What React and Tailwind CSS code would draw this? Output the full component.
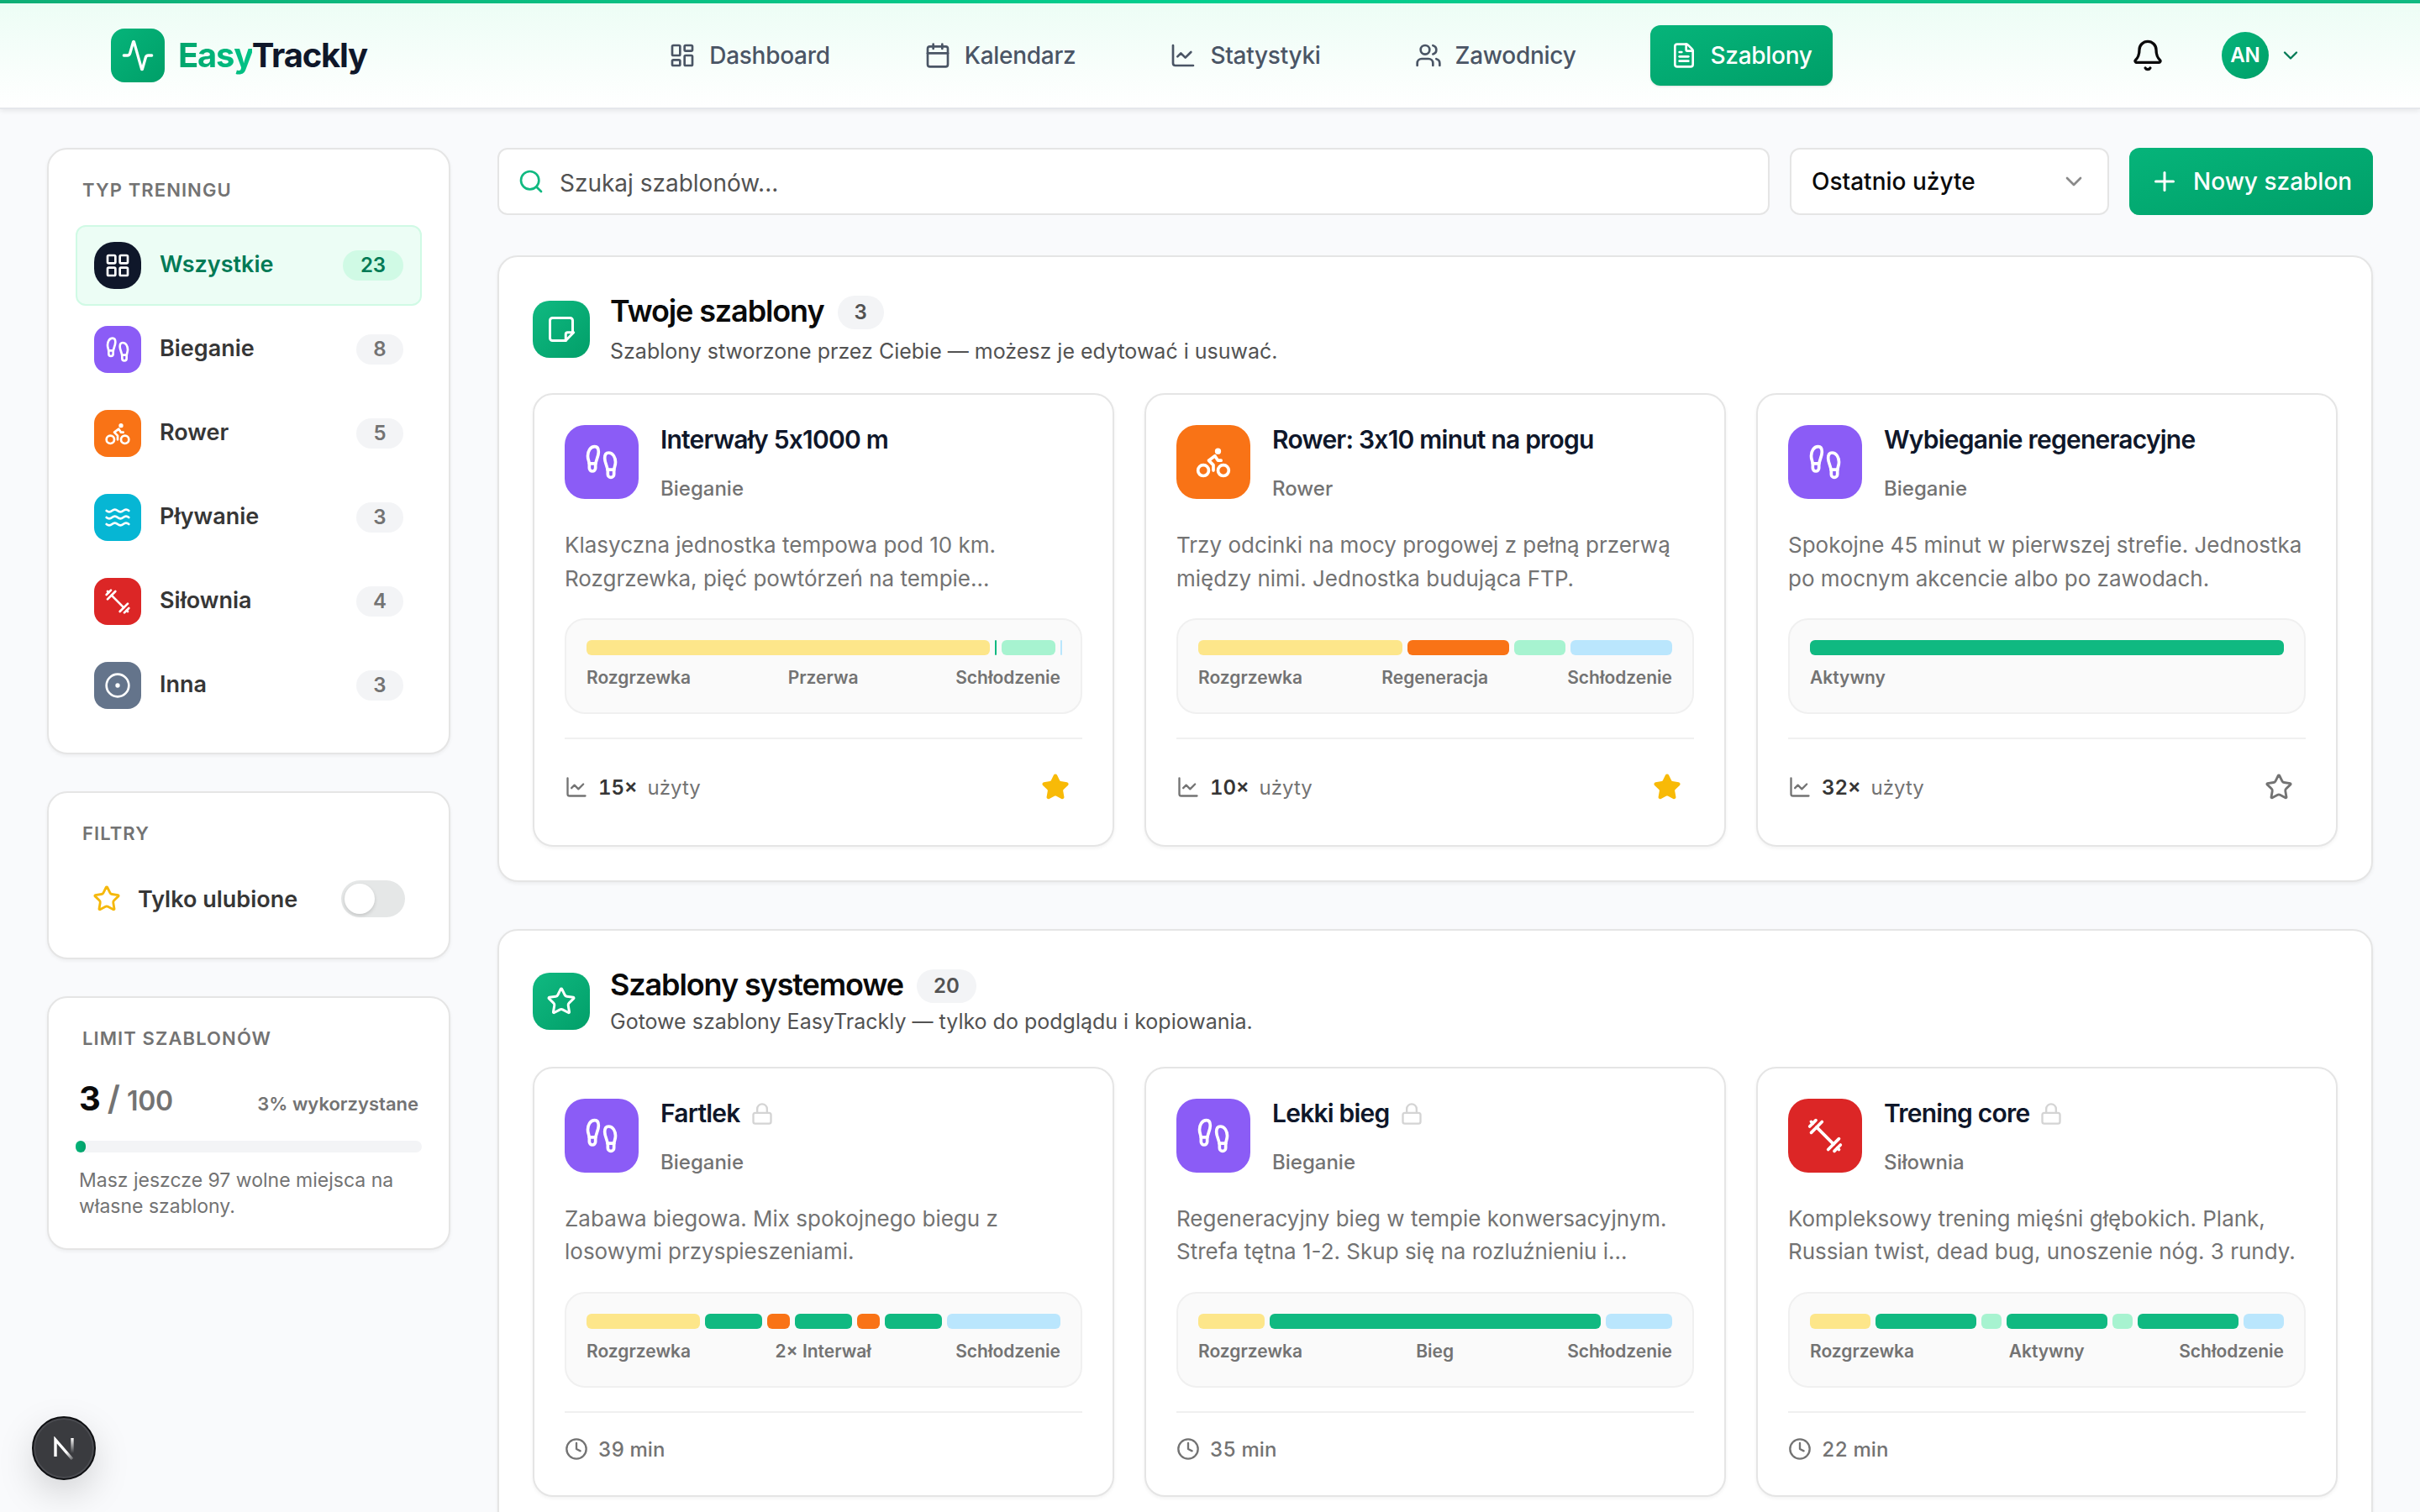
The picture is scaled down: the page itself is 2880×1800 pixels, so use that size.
import { useState } from 'react';
import {
  Activity, Bell, Bike, Calendar, ChartLine, ChevronDown, CircleDot, Clock, FileText,
  Footprints, LayoutDashboard, LayoutGrid, Lock, Plus, Search, Star, Users, Waves,
} from 'lucide-react';

const Dumbbell = ({ className }) => (
  <svg viewBox="0 0 24 24" fill="none" stroke="currentColor" strokeWidth="2" strokeLinecap="round" strokeLinejoin="round" className={className}>
    <path d="m6.5 6.5 11 11" />
    <path d="m21 21-1-1" />
    <path d="m3 3 1 1" />
    <path d="m18 22 4-4" />
    <path d="m2 6 4-4" />
    <path d="m3 10 7-7" />
    <path d="m14 21 7-7" />
  </svg>
);

const NoteIcon = ({ className }) => (
  <svg viewBox="0 0 24 24" fill="none" stroke="currentColor" strokeWidth="2" strokeLinecap="round" strokeLinejoin="round" className={className}>
    <path d="M15.5 21H5a2 2 0 0 1-2-2V5a2 2 0 0 1 2-2h14a2 2 0 0 1 2 2v9.5" />
    <path d="M15.5 21v-5a1.5 1.5 0 0 1 1.5-1.5h4.8Z" />
  </svg>
);

const SPORTS = {
  run: { label: 'Bieganie', icon: Footprints, bg: 'bg-[#8b5cf6]' },
  bike: { label: 'Rower', icon: Bike, bg: 'bg-[#f97316]' },
  swim: { label: 'Pływanie', icon: Waves, bg: 'bg-[#06b6d4]' },
  gym: { label: 'Siłownia', icon: Dumbbell, bg: 'bg-[#dc2626]' },
  other: { label: 'Inna', icon: CircleDot, bg: 'bg-[#64748b]' },
};

const SEGMENTS = {
  warmup: 'bg-[#fde68a]',
  active: 'bg-[#10b981]',
  interval: 'bg-[#f97316]',
  rest: 'bg-[#a7f3d0]',
  cooldown: 'bg-[#bae6fd]',
};

const navItems = [
  { label: 'Dashboard', icon: LayoutDashboard },
  { label: 'Kalendarz', icon: Calendar },
  { label: 'Statystyki', icon: ChartLine },
  { label: 'Zawodnicy', icon: Users },
  { label: 'Szablony', icon: FileText, active: true },
];

const counts = [
  ['run', 8],
  ['bike', 5],
  ['swim', 3],
  ['gym', 4],
  ['other', 3],
];

const ownTemplates = [
  {
    title: 'Interwały 5x1000 m',
    sport: 'run',
    lines: ['Klasyczna jednostka tempowa pod 10 km.', 'Rozgrzewka, pięć powtórzeń na tempie...'],
    bars: [['warmup', 480], ['active', 1], ['rest', 64], ['cooldown', 1]],
    labels: ['Rozgrzewka', 'Przerwa', 'Schłodzenie'],
    used: 15,
    favorite: true,
  },
  {
    title: 'Rower: 3x10 minut na progu',
    sport: 'bike',
    lines: ['Trzy odcinki na mocy progowej z pełną przerwą', 'między nimi. Jednostka budująca FTP.'],
    bars: [['warmup', 4], ['interval', 2], ['rest', 1], ['cooldown', 2]],
    labels: ['Rozgrzewka', 'Regeneracja', 'Schłodzenie'],
    used: 10,
    favorite: true,
  },
  {
    title: 'Wybieganie regeneracyjne',
    sport: 'run',
    lines: ['Spokojne 45 minut w pierwszej strefie. Jednostka', 'po mocnym akcencie albo po zawodach.'],
    bars: [['active', 45]],
    labels: ['Aktywny'],
    used: 32,
    favorite: false,
  },
];

const systemTemplates = [
  {
    title: 'Fartlek',
    sport: 'run',
    lines: ['Zabawa biegowa. Mix spokojnego biegu z', 'losowymi przyspieszeniami.'],
    bars: [['warmup', 10], ['active', 5], ['interval', 2], ['active', 5], ['interval', 2], ['active', 5], ['cooldown', 10]],
    labels: ['Rozgrzewka', '2× Interwał', 'Schłodzenie'],
    minutes: 39,
  },
  {
    title: 'Lekki bieg',
    sport: 'run',
    lines: ['Regeneracyjny bieg w tempie konwersacyjnym.', 'Strefa tętna 1-2. Skup się na rozluźnieniu i...'],
    bars: [['warmup', 5], ['active', 25], ['cooldown', 5]],
    labels: ['Rozgrzewka', 'Bieg', 'Schłodzenie'],
    minutes: 35,
  },
  {
    title: 'Trening core',
    sport: 'gym',
    lines: ['Kompleksowy trening mięśni głębokich. Plank,', 'Russian twist, dead bug, unoszenie nóg. 3 rundy.'],
    bars: [['warmup', 3], ['active', 5], ['rest', 1], ['active', 5], ['rest', 1], ['active', 5], ['cooldown', 2]],
    labels: ['Rozgrzewka', 'Aktywny', 'Schłodzenie'],
    minutes: 22,
  },
];

const Header = () => (
  <header className="h-[130px] shrink-0 flex flex-col border-b-2 border-[#e5e7eb] bg-gradient-to-b from-[#ecfdf5] to-white shadow-[0_2px_6px_rgba(0,0,0,0.08)]">
    <div className="h-1 shrink-0 bg-gradient-to-r from-[#0fae76] via-[#02cf8e] to-[#10b981]" />
    <div className="flex-1 px-[132px] flex items-center justify-between">
      <div className="flex items-center gap-4">
        <div className="size-16 rounded-2xl bg-gradient-to-br from-[#06b47a] to-[#009f68] flex items-center justify-center text-white">
          <Activity className="size-10" />
        </div>
        <span className="text-[40px] leading-none font-bold tracking-[-0.03em] text-[#0f172a]">
          <span className="bg-gradient-to-r from-[#02a46c] to-[#02c487] bg-clip-text text-transparent">Easy</span>Trackly
        </span>
      </div>
      <nav className="flex items-center gap-16">
        {navItems.map(({ label, icon: Icon, active }) => (
          <a
            key={label}
            className={`h-[72px] px-6 flex items-center gap-4 rounded-xl text-[28px] font-medium tracking-[-0.01em] ${active ? 'bg-gradient-to-br from-[#06b47a] to-[#009f68] text-white shadow-sm' : 'text-[#4a5565]'}`}
          >
            <Icon className="size-8" />
            {label}
          </a>
        ))}
      </nav>
      <div className="flex items-center gap-10">
        <button className="p-5 text-[#0a0a0a]">
          <Bell className="size-10" />
        </button>
        <button className="px-2 flex items-center gap-3">
          <span className="size-14 rounded-full bg-gradient-to-br from-[#06b47a] to-[#009f68] flex items-center justify-center text-2xl font-semibold text-white">AN</span>
          <ChevronDown className="size-7 text-[#007a55]" />
        </button>
      </div>
    </div>
  </header>
);

const SidebarCard = ({ title, className = '', children }) => (
  <div className={`w-full rounded-3xl border-2 border-[#e5e5e5] bg-white p-8 shadow-[0_2px_4px_rgba(0,0,0,0.05)] ${className}`}>
    <h2 className="h-8 px-2 flex items-center text-[22px] font-semibold tracking-[0.05em] uppercase text-[#737373]">{title}</h2>
    {children}
  </div>
);

const TypeRow = ({ label, icon: Icon, bg, count, active }) => (
  <button className={`h-24 px-5 flex items-center rounded-xl border-2 ${active ? 'bg-[#ecfdf5] border-[#d0fae5]' : 'border-transparent'}`}>
    <span className={`size-14 flex items-center justify-center text-white ${bg} ${active ? 'rounded-3xl' : 'rounded-2xl'}`}>
      <Icon className="size-8" />
    </span>
    <span className={`ml-[22px] flex-1 pb-0.5 text-left text-[27px] font-semibold ${active ? 'text-[#007a55]' : 'text-[#363636]'}`}>{label}</span>
    <span className={`h-9 flex items-center justify-center rounded-full text-2xl font-semibold ${active ? 'w-[72px] bg-[#d0fae5] text-[#007a55]' : 'w-14 bg-[#f3f4f6] text-[#737373]'}`}>{count}</span>
  </button>
);

const Sidebar = () => {
  const [onlyFavorites, setOnlyFavorites] = useState(false);

  return (
    <aside className="w-[480px] shrink-0 flex flex-col gap-11">
      <SidebarCard title="Typ treningu" className="h-[722px]">
        <div className="mt-[26px] flex flex-col gap-1">
          <TypeRow label="Wszystkie" icon={LayoutGrid} bg="bg-[#0f172a]" count={23} active />
          {counts.map(([key, count]) => (
            <TypeRow key={key} {...SPORTS[key]} count={count} />
          ))}
        </div>
      </SidebarCard>

      <SidebarCard title="Filtry" className="h-[200px]">
        <div className="mt-6 h-[76px] px-5 flex items-center">
          <Star className="size-[34px] text-[#f5b80b]" />
          <span className="ml-5 flex-1 pt-0.5 text-[27px] font-semibold text-[#363636]">Tylko ulubione</span>
          <button
            onClick={() => setOnlyFavorites(!onlyFavorites)}
            className={`w-[76px] h-11 p-1 flex items-center rounded-full ${onlyFavorites ? 'justify-end bg-[#10b981]' : 'bg-[#e5e7e7]'}`}
          >
            <span className="size-9 rounded-full bg-white shadow-[0_2px_4px_rgba(0,0,0,0.15)]" />
          </button>
        </div>
      </SidebarCard>

      <SidebarCard title="Limit szablonów" className="h-[302px]">
        <div className="mt-[26px] h-[60px] px-1 flex items-baseline justify-between leading-[60px]">
          <div className="flex items-baseline gap-2 font-semibold text-[#737373]">
            <span className="text-[40px] font-bold text-[#0a0a0a]">3</span>
            <span className="text-[40px]">/</span>
            <span className="text-[32px] tracking-[-0.01em]">100</span>
          </div>
          <span className="text-[22px] font-semibold text-[#737373]">3% wykorzystane</span>
        </div>
        <div className="mt-5 h-3.5 rounded-full bg-[#f3f4f6]">
          <div className="h-full w-[3%] rounded-full bg-gradient-to-r from-[#06b47a] to-[#009f68]" />
        </div>
        <p className="mt-[18px] px-1 text-[23px] leading-[30.5px] text-[#737373]">
          Masz jeszcze 97 wolne miejsca na<br />własne szablony.
        </p>
      </SidebarCard>
    </aside>
  );
};

const Timeline = ({ bars, labels }) => {
  const total = bars.reduce((sum, [, w]) => sum + w, 0);
  const space = 564 - (bars.length - 1) * 6;
  return (
    <div className="h-[114px] p-6 rounded-3xl border-2 border-[#f0f0f0] bg-[#fafafa]">
      <div className="h-[18px] flex gap-1.5">
        {bars.map(([kind, w], i) => (
          <div key={i} className={`min-w-0.5 shrink-0 rounded-md ${SEGMENTS[kind]}`} style={{ width: (w / total) * space }} />
        ))}
      </div>
      <div className="mt-2.5 flex justify-between text-[21px] leading-[33px] font-semibold text-[#737373]">
        {labels.map((l) => <span key={l}>{l}</span>)}
      </div>
    </div>
  );
};

const TemplateCard = ({ template }) => {
  const { title, sport, lines, bars, labels, used, favorite, minutes } = template;
  const { label, icon: Icon, bg } = SPORTS[sport];
  return (
    <article className="p-9 flex flex-col gap-7 rounded-3xl border-2 border-[#e5e5e5] bg-white shadow-[0_2px_4px_rgba(0,0,0,0.05)]">
      <div className="h-24 flex gap-[26px]">
        <div className={`size-[88px] shrink-0 rounded-3xl flex items-center justify-center text-white ${bg}`}>
          <Icon className="size-11" />
        </div>
        <div className="flex flex-col justify-between">
          <div className="flex items-center gap-3">
            <h3 className="text-[30px] leading-[34px] pb-0.5 font-semibold tracking-[-0.026em] text-[#0f172a]">{title}</h3>
            {minutes && <Lock className="size-7 text-[#d4d4d4]" />}
          </div>
          <span className="text-2xl leading-10 font-medium text-[#737373]">{label}</span>
        </div>
      </div>
      <p className={`-mt-px whitespace-nowrap text-[26px] text-[#737373] ${minutes ? 'mb-px leading-[39px]' : '-mb-px leading-10'}`}>
        {lines[0]}<br />{lines[1]}
      </p>
      <Timeline bars={bars} labels={labels} />
      <div className="pt-6 border-t-2 border-[#f0f0f0] flex items-center justify-between text-2xl tabular-nums text-[#737373]">
        {minutes ? (
          <div className="h-[38px] flex items-center gap-3 font-medium">
            <Clock className="size-7" />
            <span className="pt-0.5">{minutes} min</span>
          </div>
        ) : (
          <>
            <div className="flex items-center gap-3">
              <ChartLine className="size-7" />
              <span className="pt-0.5 font-semibold text-[#363636]">{used}×</span>
              <span className="pt-0.5">użyty</span>
            </div>
            <button className="p-4 -mr-px">
              <Star className={`size-[34px] ${favorite ? 'fill-[#f8ba07] text-[#f8ba07]' : ''}`} />
            </button>
          </>
        )}
      </div>
    </article>
  );
};

const Section = ({ title, subtitle, count, icon: Icon, templates, headClass }) => (
  <section className="px-10 pt-10 pb-10 rounded-3xl border-2 border-[#e5e5e5] bg-white shadow-[0_2px_4px_rgba(0,0,0,0.06)]">
    <div className={`flex items-center gap-6 ${headClass}`}>
      <div className="size-[68px] rounded-[20px] bg-gradient-to-br from-[#10b981] to-[#029f69] flex items-center justify-center text-white">
        <Icon className="size-9" />
      </div>
      <div className="h-full flex flex-col justify-between">
        <div className="h-[47px] flex items-center gap-4">
          <h2 className="text-[36px] font-semibold tracking-[-0.031em] text-[#0a0a0a]">{title}</h2>
          <span className="h-10 mt-1 px-5 flex items-center rounded-full bg-[#f3f4f6] text-2xl font-semibold text-[#525252]">{count}</span>
        </div>
        <p className="text-[25px] leading-10 text-[#525252]">{subtitle}</p>
      </div>
    </div>
    <div className="grid grid-cols-3 gap-9">
      {templates.map((t) => <TemplateCard key={t.title} template={t} />)}
    </div>
  </section>
);

const DevBadge = () => (
  <div className="absolute left-[38px] top-[1686px] size-[76px] rounded-full border-2 border-[#0f1013] bg-[#3a3b3f] shadow-[inset_0_0_0_2px_#4a4b50,0_16px_48px_-6px_rgba(0,0,0,0.22)] flex items-center justify-center">
    <svg viewBox="0 0 24 28" fill="none" className="w-6 h-7">
      <defs>
        <linearGradient id="diag" x1="12" y1="14" x2="24" y2="28" gradientUnits="userSpaceOnUse">
          <stop offset="0.3" stopColor="#fff" />
          <stop offset="1" stopColor="#fff" stopOpacity="0.1" />
        </linearGradient>
        <linearGradient id="stem" x1="0" y1="2" x2="0" y2="20" gradientUnits="userSpaceOnUse">
          <stop stopColor="#fff" />
          <stop offset="1" stopColor="#fff" stopOpacity="0" />
        </linearGradient>
      </defs>
      <path d="M2 24V4L22 27" stroke="url(#diag)" strokeWidth="3.4" />
      <path d="M22 2v18" stroke="url(#stem)" strokeWidth="3.4" />
    </svg>
  </div>
);

export default function App() {
  return (
    <div className="relative w-[2880px] h-[1800px] overflow-hidden flex flex-col bg-[#f9fafc] font-['Inter',sans-serif]">
      <Header />
      <div className="px-14 pt-[46px] flex items-start gap-14">
        <Sidebar />
        <main className="flex-1 flex flex-col">
          <div className="h-20 flex gap-6 text-[28px] font-medium">
            <div className="flex-1 px-[22px] flex items-center gap-[18px] rounded-xl border-2 border-[#e5e5e5] bg-white font-normal text-[#525252]">
              <Search className="size-8 text-[#10b981]" />
              <span className="pt-[3px]">Szukaj szablonów...</span>
            </div>
            <div className="w-[380px] px-6 flex items-center justify-between rounded-xl border-2 border-[#e5e5e5] bg-white text-[#0a0a0a]">
              Ostatnio użyte
              <ChevronDown className="size-8 text-[#8a8a8a]" />
            </div>
            <button className="w-[290px] px-6 flex items-center gap-4 rounded-xl whitespace-nowrap bg-gradient-to-br from-[#06b47a] to-[#009f68] text-white">
              <Plus className="size-9 shrink-0" />
              Nowy szablon
            </button>
          </div>
          <div className="mt-12 flex flex-col gap-14">
            <Section
              title="Twoje szablony"
              subtitle="Szablony stworzone przez Ciebie — możesz je edytować i usuwać."
              count={3}
              icon={NoteIcon}
              templates={ownTemplates}
              headClass="h-[92px] mb-[30px]"
            />
            <Section
              title="Szablony systemowe"
              subtitle="Gotowe szablony EasyTrackly — tylko do podglądu i kopiowania."
              count={20}
              icon={Star}
              templates={systemTemplates}
              headClass="h-[88px] mb-[34px]"
            />
          </div>
        </main>
      </div>
      <DevBadge />
    </div>
  );
}
